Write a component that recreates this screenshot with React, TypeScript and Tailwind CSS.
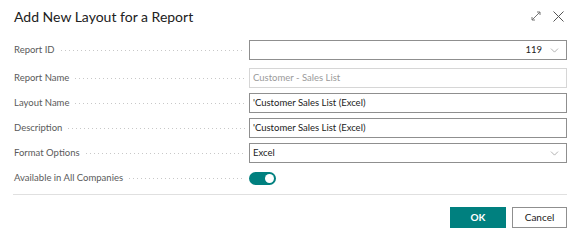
import { ChevronDown } from "lucide-react";

const font = "font-['Segoe_UI','Lato','Noto_Sans',sans-serif]";

function Label({ text }: { text: string }) {
  return (
    <div className="flex w-[235px] shrink-0 items-center pr-[4px]">
      <span className="whitespace-nowrap text-[9.5px] text-[#5a5a5a]">{text}</span>
      <div className="ml-[6px] h-px flex-1 bg-[linear-gradient(to_right,#c8c8c8_1px,transparent_1px)] bg-[length:4px_1px] bg-repeat-x" />
    </div>
  );
}

function Field({
  label,
  value,
  align = "left",
  select = false,
  disabled = false,
}: {
  label: string;
  value: string;
  align?: "left" | "right";
  select?: boolean;
  disabled?: boolean;
}) {
  return (
    <div className="flex h-5 items-center">
      <Label text={label} />
      <div
        className={`flex h-5 flex-1 items-center border bg-white pl-[3px] pr-[5px] text-[9.5px] ${
          disabled
            ? "border-[#d6d6d6] text-[#9a9a9a]"
            : "border-[#8f8f8f] text-[#212121]"
        }`}
      >
        <span className={`flex-1 truncate ${align === "right" ? "text-right" : ""}`}>{value}</span>
        {select && <ChevronDown className="ml-[6px] h-[13px] w-[13px] text-[#8a8a8a]" strokeWidth={1.2} />}
      </div>
    </div>
  );
}

export default function App() {
  return (
    <div className={`h-[241px] w-[582px] bg-white pl-[14px] pr-[15px] ${font}`}>
      {/* Header */}
      <div className="flex h-8 items-center justify-between">
        <h1 className="text-[14px] font-normal text-[#212121]">Add New Layout for a Report</h1>
        <div className="flex items-center gap-[12px] pr-[3px] text-[#666]">
          <svg width="10" height="10" viewBox="0 0 10 10" fill="none" stroke="#777" strokeWidth="1">
            <path d="M1 9 L9 1" />
            <path d="M1 6 V9 H4" />
            <path d="M6 1 H9 V4" />
          </svg>
          <svg width="11" height="11" viewBox="0 0 11 11" fill="none" stroke="#555" strokeWidth="1">
            <path d="M0.5 0.5 L10.5 10.5 M10.5 0.5 L0.5 10.5" />
          </svg>
        </div>
      </div>

      {/* Fields */}
      <div className="mt-2 flex flex-col gap-[5px]">
        <div className="mb-[3px]">
          <Field label="Report ID" value="119" align="right" select />
        </div>
        <Field label="Report Name" value="Customer - Sales List" disabled />
        <Field label="Layout Name" value="'Customer Sales List (Excel)" />
        <Field label="Description" value="'Customer Sales List (Excel)" />
        <Field label="Format Options" value="Excel" select />
        <div className="flex h-5 items-center">
          <Label text="Available in All Companies" />
          <div className="flex h-[13px] w-[27px] items-center justify-end rounded-full bg-[#00807f] pr-[2px]">
            <div className="h-[9px] w-[9px] rounded-full bg-white" />
          </div>
        </div>
      </div>

      {/* Divider */}
      <div className="ml-[-1px] mt-[6px] h-px bg-[#e0e0e0]" />

      {/* Actions */}
      <div className="mt-[12px] flex justify-end gap-[6px]">
        <button className="h-[21px] w-[56px] bg-[#00807f] text-[10px] font-bold text-white">OK</button>
        <button className="h-[21px] w-[55px] border border-[#8f8f8f] bg-white text-[10px] text-[#212121]">
          Cancel
        </button>
      </div>
    </div>
  );
}
